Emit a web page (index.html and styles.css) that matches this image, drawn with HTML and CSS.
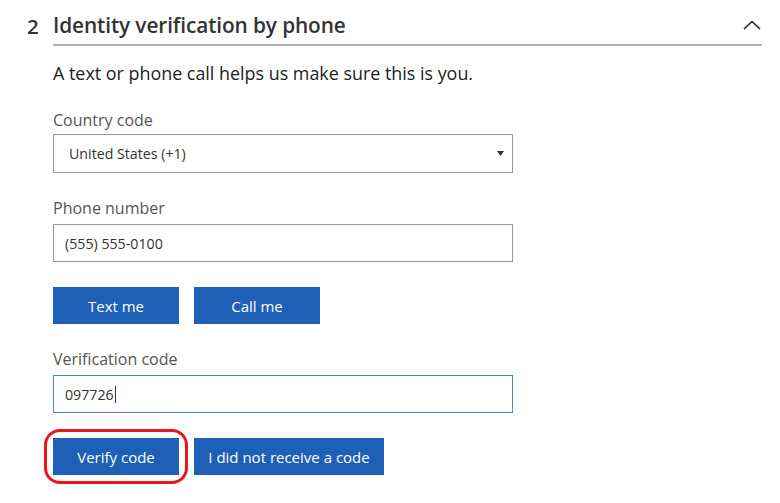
FILE: index.html
```html
<!DOCTYPE html>
<html>
<head>
<meta charset="utf-8">
<link rel="stylesheet" href="styles.css">
</head>
<body>
<div class="section">
  <div class="head">
    <span class="num">2</span>
    <div class="title-row">
      <h2 class="title">Identity verification by phone</h2>
      <svg class="chev" width="18" height="10" viewBox="0 0 18 10"><path d="M1 9 L9 1.5 L17 9" fill="none" stroke="#222" stroke-width="1.6"/></svg>
    </div>
  </div>
  <div class="body">
    <p class="intro">A text or phone call helps us make sure this is you.</p>
    <label class="lbl first">Country code</label>
    <div class="field select">
      <span>United States (+1)</span>
      <svg class="arrow" width="7" height="5" viewBox="0 0 7 5"><path d="M0 0 H7 L3.5 5 Z" fill="#333"/></svg>
    </div>
    <label class="lbl">Phone number</label>
    <div class="field input"><span>(555) 555-0100</span></div>
    <div class="btns">
      <button class="btn">Text me</button>
      <button class="btn">Call me</button>
    </div>
    <label class="lbl">Verification code</label>
    <div class="field input focus"><span>097726</span><span class="cursor"></span></div>
    <div class="btns last">
      <div class="hl"><button class="btn">Verify code</button></div>
      <button class="btn wide">I did not receive a code</button>
    </div>
  </div>
</div>
</body>
</html>
```
FILE: styles.css
```css
html, body { margin: 0; padding: 0; background: #fff; }
body { font-family: "Open Sans", "Noto Sans", sans-serif; color: #333; width: 780px; height: 503px; overflow: hidden; }
.section { padding: 0 18px 0 27px; }
.head { display: flex; align-items: flex-start; padding-top: 11px; }
.num { font-size: 20.5px; font-weight: 600; color: #333; width: 26px; line-height: 30px; }
.title-row { flex: 1; display: flex; align-items: center; justify-content: space-between; border-bottom: 2px solid #b0b0b0; height: 35px; box-sizing: border-box; padding-bottom: 5px; }
.title { margin: 0; font-size: 20.8px; font-weight: 600; line-height: 30px; color: #333; letter-spacing: -0.1px; }
.chev { margin-right: 1px; margin-top: 0px; }
.body { padding-left: 26px; }
.intro { margin: 15px 0 0 0; font-size: 17.9px; line-height: 24px; color: #222; }
.lbl { display: block; font-size: 16px; line-height: 22px; color: #555; margin-top: 24px; margin-bottom: 5px; }
.lbl.first { margin-top: 24px; margin-bottom: 3px; }
.field { width: 460px; height: 39px; box-sizing: border-box; border: 1px solid #999; display: flex; align-items: center; font-size: 14.2px; color: #333; }
.select { padding-left: 15px; justify-content: space-between; padding-right: 8px; }
.input { height: 38px; padding-left: 11px; }
.focus { border-color: #4a86d4; }
.cursor { display: inline-block; width: 1px; height: 17px; background: #333; margin-left: 1px; }
.btns { display: flex; gap: 15px; margin-top: 25px; }
.btn { width: 126px; height: 37px; border: none; background: #1e60b6; color: #fff; font-family: "Open Sans", "Noto Sans", sans-serif; font-size: 15px; padding: 0; }
.btn.wide { width: 190px; }
.btns.last { margin-top: 25px; }
.hl { outline: 3px solid #e8141e; outline-offset: 6px; border-radius: 7px; display: flex; }
```
